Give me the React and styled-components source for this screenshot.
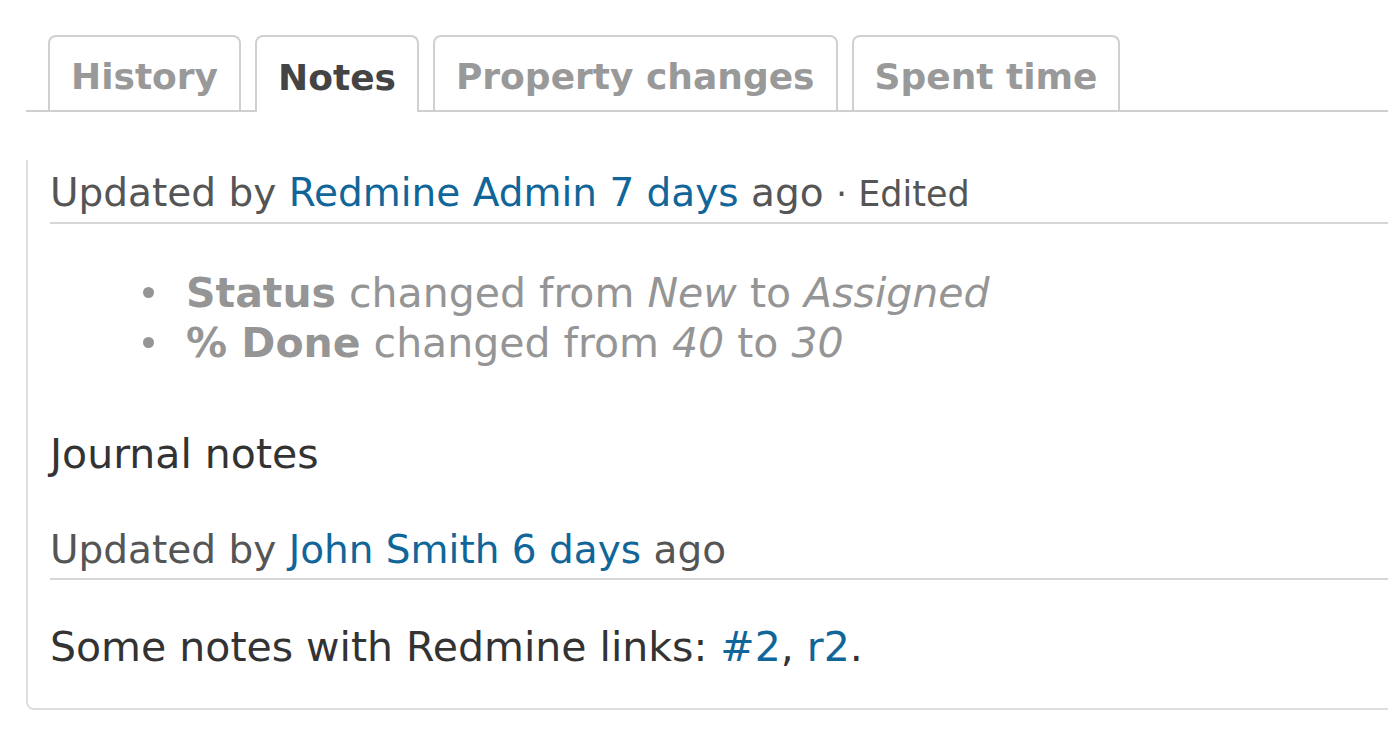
import React from "react";
import styled, { createGlobalStyle } from "styled-components";

const Global = createGlobalStyle`
  html, body { margin: 0; padding: 0; background: #fff; overflow: hidden; }
  body { font-family: "DejaVu Sans", Verdana, sans-serif; color: #333; }
`;

const Page = styled.div`
  width: 1388px;
  height: 734px;
  overflow: hidden;
`;

const TabBar = styled.ul`
  list-style: none;
  margin: 0 0 0 26px;
  padding: 35px 0 0 22px;
  display: flex;
  gap: 14px;
  border-bottom: 2px solid #cfcfcf;
  width: calc(100% + 40px);
  box-sizing: border-box;
`;

const Tab = styled.li`
  box-sizing: border-box;
  height: ${(p) => (p.$active ? "77px" : "75px")};
  margin-bottom: ${(p) => (p.$active ? "-2px" : "0")};
  padding: 5px 21px 0 21px;
  display: flex;
  align-items: center;
  border: 2px solid #d0d0d0;
  border-bottom: none;
  border-radius: 8px 8px 0 0;
  background: #fff;
  font-weight: bold;
  font-size: 36px;
  color: ${(p) => (p.$active ? "#444" : "#999")};
  white-space: nowrap;
`;

const Box = styled.div`
  margin: 48px -40px 0 26px;
  padding: 9px 0 36px 22px;
  border: 2px solid #dedede;
  border-top: none;
  border-radius: 0 0 8px 8px;
`;

const Header = styled.h4`
  margin: 0;
  font-weight: normal;
  font-size: 39px;
  line-height: 48px;
  color: #555;
  padding-bottom: 4px;
  border-bottom: 2px solid #d6d6d6;
  white-space: nowrap;
`;

const Link = styled.a`
  color: #169;
  text-decoration: none;
`;

const Edited = styled.span`
  font-size: 35px;
  color: #555;
`;

const Details = styled.ul`
  margin: 44px 0 0 0;
  padding-left: 136px;
  list-style: none;
  font-size: 41px;
  line-height: 50px;
  color: #959595;
`;

const Detail = styled.li`
  &::before {
    content: "";
    display: inline-block;
    width: 11px;
    height: 11px;
    border-radius: 50%;
    background: #959595;
    margin-left: -43px;
    margin-right: 32px;
    vertical-align: 0.22em;
  }
`;

const Notes = styled.p`
  margin: ${(p) => p.$top || "0"} 0 0 0;
  font-size: 41px;
  line-height: 50px;
  color: #333;
`;

const Journal = styled.div`
  margin-top: ${(p) => p.$top || "0"};
`;

export default function App() {
  return (
    <Page>
      <Global />
      <TabBar>
        <Tab>History</Tab>
        <Tab $active>Notes</Tab>
        <Tab>Property changes</Tab>
        <Tab>Spent time</Tab>
      </TabBar>
      <Box>
        <Journal>
          <Header>
            Updated by <Link href="#">Redmine Admin</Link>{" "}
            <Link href="#">7 days</Link> ago <Edited>· Edited</Edited>
          </Header>
          <Details>
            <Detail>
              <strong>Status</strong> changed from <i>New</i> to <i>Assigned</i>
            </Detail>
            <Detail>
              <strong>% Done</strong> changed from <i>40</i> to <i>30</i>
            </Detail>
          </Details>
          <Notes $top="61px">Journal notes</Notes>
        </Journal>
        <Journal $top="47px">
          <Header>
            Updated by <Link href="#">John Smith</Link>{" "}
            <Link href="#">6 days</Link> ago
          </Header>
          <Notes $top="42px">
            Some notes with Redmine links: <Link href="#">#2</Link>,{" "}
            <Link href="#">r2</Link>.
          </Notes>
        </Journal>
      </Box>
    </Page>
  );
}
